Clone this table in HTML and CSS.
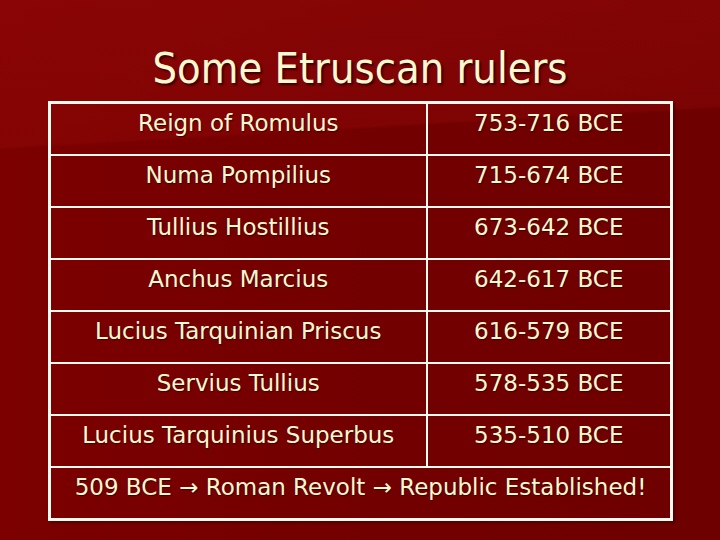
FILE: index.html
```html
<!DOCTYPE html>
<html>
<head>
<meta charset="utf-8">
<link rel="stylesheet" href="styles.css">
</head>
<body>
<div class="slide">
  <h1 class="title">Some Etruscan rulers</h1>
  <table class="rulers">
    <tr><td class="name">Reign of Romulus</td><td class="date">753-716 BCE</td></tr>
    <tr><td class="name">Numa Pompilius</td><td class="date">715-674 BCE</td></tr>
    <tr><td class="name">Tullius Hostillius</td><td class="date">673-642 BCE</td></tr>
    <tr><td class="name">Anchus Marcius</td><td class="date">642-617 BCE</td></tr>
    <tr><td class="name">Lucius Tarquinian Priscus</td><td class="date">616-579 BCE</td></tr>
    <tr><td class="name">Servius Tullius</td><td class="date">578-535 BCE</td></tr>
    <tr><td class="name">Lucius Tarquinius Superbus</td><td class="date">535-510 BCE</td></tr>
    <tr><td class="summary" colspan="2">509 BCE <span class="arrow">→</span> Roman Revolt <span class="arrow">→</span> Republic Established!</td></tr>
  </table>
</div>
</body>
</html>
```
FILE: styles.css
```css
html, body {
  margin: 0;
  padding: 0;
}
body {
  width: 720px;
  height: 540px;
  overflow: hidden;
}
.slide {
  width: 720px;
  height: 540px;
  box-sizing: border-box;
  padding-top: 41px;
  background:
    linear-gradient(176.7deg, rgba(150, 10, 10, 0.55) 0px, rgba(150, 10, 10, 0.35) 147px, rgba(0,0,0,0) 150px),
    linear-gradient(90deg, #7c0000 0%, #740000 45%, #6e0000 100%);
  font-family: "DejaVu Sans", sans-serif;
  color: #fff8d0;
}
.title {
  margin: 0;
  height: 60px;
  font-family: "DejaVu Sans Condensed", "DejaVu Sans", sans-serif;
  font-weight: normal;
  font-size: 43px;
  line-height: 54px;
  text-align: center;
  text-shadow: 2px 2px 2px #3a0000;
}
.rulers {
  margin-left: 48px;
  width: 625px;
  border-collapse: collapse;
  border: 3px solid #fffaf0;
  box-shadow: 2px 2px 2px rgba(60, 0, 0, 0.6);
}
.rulers td {
  border: 2px solid #fffaf0;
  height: 50px;
  box-sizing: border-box;
  padding: 0 0 12px 0;
  text-align: center;
  font-size: 23px;
  line-height: 38px;
  text-shadow: 1px 1px 1px #3a0000;
}
.rulers td.name {
  width: 377px;
}
.rulers td.summary {
  height: 49px;
}
```
